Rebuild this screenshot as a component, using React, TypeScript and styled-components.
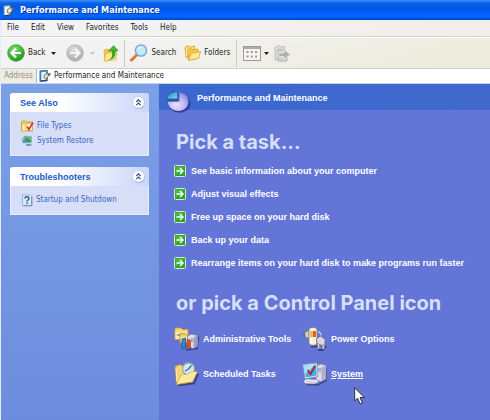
import React from "react";
import styled, { createGlobalStyle } from "styled-components";

const ui = `"DejaVu Sans Condensed", "Noto Sans", sans-serif`;
const bold = `"Liberation Sans", sans-serif`;

const GlobalStyle = createGlobalStyle`
  * { box-sizing: border-box; }
  body { margin: 0; font: 8px/12px ${ui}; color: #222; background: #6375d6; }
  button, input { font: inherit; color: inherit; border: 0; background: none; padding: 0; margin: 0; }
  ul { list-style: none; margin: 0; padding: 0; }
  h1, h2, h3 { margin: 0; }
  a { color: inherit; text-decoration: none; }
  svg { display: block; flex: none; overflow: visible; }
`;

const Window = styled.div`
  min-height: 100vh;
  display: flex;
  flex-direction: column;
  border-left: 1px solid #e4ecfa;
`;

const TitleBar = styled.header`
  display: flex;
  align-items: center;
  gap: 5px;
  height: 20px;
  margin-left: -1px;
  padding: 0 2px;
  color: #fff;
  background: linear-gradient(#3a93fb 0, #0a63ea 3px, #0054e3 8px, #0162fb 13px, #0066ff 17px, #0040c4 20px);
`;

const WindowTitle = styled.h1`
  font: 700 9px/16px "DejaVu Sans Condensed", sans-serif;
  text-shadow: 1px 1px 0 #0b3aa0;
`;

const MenuBar = styled.nav`
  display: flex;
  align-items: center;
  gap: 12px;
  height: 17px;
  padding: 0 6px;
  background: linear-gradient(90deg, #f4f4f6, #efeee8);
  border-bottom: 1px solid #d6d3c6;
`;

const Toolbar = styled.div`
  display: flex;
  align-items: center;
  height: 32px;
  padding: 0 6px;
  background: linear-gradient(165deg, #f3f3f3 20%, #ecead8);
  border-top: 1px solid #fff;
  border-bottom: 1px solid #c9d0d4;
`;

const ToolButton = styled.button<{ $after: number }>`
  display: flex;
  align-items: center;
  gap: 3px;
  margin-right: ${(p) => p.$after}px;
`;

const Divider = styled.span<{ $after: number }>`
  width: 1px;
  height: 27px;
  background: #cfccbd;
  margin-right: ${(p) => p.$after}px;
`;

const AddressBar = styled.div`
  display: flex;
  align-items: center;
  height: 15px;
  background: #efede1;
  border-bottom: 1px solid #c5d3e6;
`;

const AddressLabel = styled.label`
  width: 35px;
  padding-left: 3px;
  color: #8f8d83;
`;

const AddressField = styled.div`
  flex: 1;
  display: flex;
  align-items: center;
  gap: 3px;
  height: 100%;
  padding-left: 2px;
  background: #fff;
  border-left: 1px solid #a9bccd;
`;

const AddressInput = styled.input`
  flex: 1;
  min-width: 0;
  outline: none;
`;

const Body = styled.div`
  flex: 1;
  display: grid;
  grid-template-columns: 158px 1fr;
`;

const Sidebar = styled.aside`
  display: flex;
  flex-direction: column;
  gap: 11px;
  padding: 9px 10px 9px 9px;
  background: linear-gradient(#7aa0e6, #6e8cdd);
`;

const Card = styled.section`
  background: #d6dff7;
  color: #3a66c8;
  border-radius: 3px 3px 0 0;
`;

const CardHeader = styled.div`
  display: flex;
  align-items: center;
  justify-content: space-between;
  height: 19px;
  padding: 0 4px 0 10px;
  border-radius: 3px 3px 0 0;
  background: linear-gradient(90deg, #fff 35%, #c9d6f8);
`;

const CardTitle = styled.h3`
  font: 700 9px/12px ${bold};
  color: #215dc6;
`;

const Collapse = styled.button`
  display: block;
`;

const CardList = styled.ul`
  display: flex;
  flex-direction: column;
  gap: 3px;
  padding: 8px 10px;
  border: 1px solid #e6ecfb;
  border-top: 0;
`;

const CardLink = styled.a`
  display: flex;
  align-items: center;
  gap: 3px;
  height: 12px;
`;

const Main = styled.main`
  background: #6375d6;
  color: #fff;
`;

const Band = styled.div`
  display: flex;
  align-items: flex-start;
  gap: 6px;
  height: 26px;
  padding: 7px 7px 0;
  background: linear-gradient(90deg, #3a68cf, #4169cd);
`;

const BandTitle = styled.h2`
  font: 700 9px/14px ${bold};
`;

const Content = styled.div`
  padding: 20px 15px;
`;

const Heading = styled.h2`
  padding-left: 2px;
  font: 700 20px/24px Inter, sans-serif;
  color: #d6dff7;
`;

const TaskList = styled.ul`
  display: flex;
  flex-direction: column;
  justify-content: space-between;
  min-height: 104px;
  margin: 11px 0 22px;
`;

const TaskItem = styled.li`
  display: flex;
`;

const TaskLink = styled.a`
  display: flex;
  align-items: center;
  gap: 5px;
  font: 700 9px/12px ${bold};
`;

const IconGrid = styled.div`
  display: grid;
  grid-template-columns: 128px 1fr;
  row-gap: 11px;
  margin-top: 12px;
`;

const IconLink = styled.a<{ $active?: boolean }>`
  display: flex;
  align-items: center;
  gap: 4px;
  font: 700 9px/12px ${bold};
  span { text-decoration: ${(p) => (p.$active ? "underline" : "none")}; }
`;

const Pointer = styled.svg`
  position: fixed;
  left: 354px;
  top: 387px;
  pointer-events: none;
`;

const PanelIcon = ({ size }: { size: number }) => (
  <svg width={size} height={size} viewBox="0 0 13 13">
    <path d="M1 1l8-.7v11.500L1 12.500z" fill="#4a8fd8" stroke="#27528e" strokeWidth=".8" />
    <path d="M2.500 2.500L7.500 2v8.500l-5 .5z" fill="#e9f6ff" />
    <path d="M5.500 8.500V5.500L9 3.500l2 1.500-2 3.500-2 1z" fill="#f1e2ac" stroke="#3c4a5c" strokeWidth=".7" />
    <path d="M9.500 3.500h3v2.500h-3z" fill="#5c6678" />
    <path d="M2 11.800l6.500-.6" stroke="#1c3a6c" />
  </svg>
);

const Orb = ({ gray }: { gray?: boolean }) => {
  const id = gray ? "orbGray" : "orbGreen";
  return (
    <svg width="18" height="18" viewBox="0 0 18 18">
      <defs>
        <radialGradient id={id} cx=".4" cy=".3" r=".75">
          <stop offset="0" stopColor={gray ? "#dcdcdc" : "#8ade76"} />
          <stop offset=".6" stopColor={gray ? "#bdbdbd" : "#3db534"} />
          <stop offset="1" stopColor={gray ? "#aaaaaa" : "#1d8a1d"} />
        </radialGradient>
      </defs>
      <circle cx="9" cy="9" r="8.300" fill={`url(#${id})`} stroke={gray ? "#b5b5b5" : "#3d9a3b"} strokeWidth=".8" />
      <path
        d={gray ? "M4 9h9M9 4.500L13.500 9 9 13.500" : "M14 9H5M9 4.500L4.500 9 9 13.500"}
        fill="none" stroke={gray ? "#f4f4f4" : "#fff"} strokeWidth="2.200"
      />
    </svg>
  );
};

const Caret = ({ color = "#222" }: { color?: string }) => (
  <svg width="5" height="3" viewBox="0 0 5 3"><path d="M0 0h5L2.500 3z" fill={color} /></svg>
);

const UpIcon = () => (
  <svg width="16" height="17" viewBox="0 0 16 17">
    <path d="M1 5l4-1 1 1.500 7-1V14L2 16z" fill="#f3c848" stroke="#d8a830" strokeWidth=".7" />
    <path d="M1 16L3 8.500l11-1.500L12.500 15z" fill="#fde88a" stroke="#dfb23c" strokeWidth=".7" />
    <path d="M4.500 15c4.500-.8 5-4 4.500-9.500h3.500c.5 6-2 9.800-8 9.500z" fill="#35a92c" />
    <path d="M5.500 6L10.500.8 15 5.500l-4.500.3z" fill="#4cbb3d" stroke="#248c20" strokeWidth=".7" />
  </svg>
);

const SearchIcon = () => (
  <svg width="18" height="18" viewBox="0 0 18 18">
    <path d="M1.500 16l6-6" stroke="#d06b2c" strokeWidth="3" strokeLinecap="round" />
    <path d="M1.500 15.200l5-5" stroke="#f6a66a" strokeLinecap="round" />
    <circle cx="11" cy="6.500" r="5.600" fill="#c4e8fc" stroke="#7aa9dd" strokeWidth="1.500" />
    <path d="M7.500 6c.5-2.500 3-3.500 5-2.700-2 .5-3.500 1.200-5 2.700z" fill="#fff" />
  </svg>
);

const FoldersIcon = () => (
  <svg width="17" height="16" viewBox="0 0 17 16">
    <path d="M1 2.500l3-2 2 1.500L10.500 1v9L2 12.500z" fill="#fbd965" stroke="#d9a02c" strokeWidth=".8" />
    <path d="M3.500 5.500l3-2 2 1.500L14 4v9l-9.500 2z" fill="#f6c94c" stroke="#d9a02c" strokeWidth=".8" />
    <path d="M4.500 15.500L7 8.500l9.500-2L14.500 13.500z" fill="#ffeb94" stroke="#d9a02c" strokeWidth=".8" />
    <path d="M2 11l1-6.500" stroke="#fff3b8" />
  </svg>
);

const ViewsIcon = () => (
  <svg width="18" height="15" viewBox="0 0 18 15">
    <rect x=".5" y=".5" width="17" height="14" fill="#f6f5f1" stroke="#9a9a96" />
    <path d="M1 2h16" stroke="#acaca8" strokeWidth="2" />
    <path d="M3.500 6h11M3.500 10.500h11" stroke="#969694" strokeWidth="2" strokeDasharray="2 2.300" />
  </svg>
);

const MoveIcon = () => (
  <svg width="17" height="17" viewBox="0 0 17 17">
    <path d="M1 2.500l4-2L6.500 2l4-.5V13L1 15z" fill="#dededc" stroke="#b3b3b0" strokeWidth=".8" />
    <path d="M4 4.500h6l3 3V16H4z" fill="#d2d2cf" stroke="#a9a9a6" strokeWidth=".8" />
    <path d="M4.500 8h5.500V4.500l6.500 5L10 14.500V11.500H4.500z" fill="#b0b0ad" stroke="#ececea" strokeWidth=".8" />
  </svg>
);

const Chevron = () => (
  <svg width="13" height="13" viewBox="0 0 13 13">
    <circle cx="6.800" cy="7" r="6" fill="#8fa6d8" />
    <circle cx="6.500" cy="6.300" r="5.900" fill="#fff" stroke="#b7c5e8" strokeWidth=".6" />
    <path d="M4.300 6l2.200-2.200L8.700 6M4.300 9.200L6.500 7l2.200 2.200" fill="none" stroke="#2c4f9e" strokeWidth="1.200" />
  </svg>
);

const FileTypesIcon = () => (
  <svg width="13" height="12" viewBox="0 0 13 12">
    <path d="M.5 2l1-1h3l1 1h6v9H.5z" fill="#f6cf55" stroke="#c79324" strokeWidth=".8" />
    <path d="M1 5h8v5.500H1z" fill="#fdeb9a" />
    <path d="M5 3.500h6.500v7H5z" fill="#fff4dc" stroke="#d29a50" strokeWidth=".6" />
    <path d="M6 6.500l2 3L12 2.500" fill="none" stroke="#d13a1d" strokeWidth="1.600" />
  </svg>
);

const RestoreIcon = () => (
  <svg width="13" height="12" viewBox="0 0 13 12">
    <path d="M3 1l7.500.8v6L3 7.500z" fill="#2e9c60" stroke="#9db2c8" strokeWidth=".8" />
    <path d="M5 2.200l5 .5V5z" fill="#82d06a" />
    <path d="M5 8.800l5 .2.5 1.800-5 .3z" fill="#7c93ab" />
    <path d="M.8 5a3 3 0 0 1 4.500-1.800" fill="none" stroke="#7bc96c" strokeWidth="1.200" />
    <circle cx="3.200" cy="6.300" r="1.900" fill="#5b8ee0" />
  </svg>
);

const HelpIcon = () => (
  <svg width="12" height="12" viewBox="0 0 12 13">
    <path d="M1 1h8l2 2v9.500H1z" fill="#d8ebfd" stroke="#8fabd2" strokeWidth=".9" />
    <path d="M11.300 3v9.700H2" fill="none" stroke="#6b86b3" />
    <path d="M3.800 5c0-3 4.600-2.500 4.300 0C8 6.500 6 6.500 6 8.200M6 9.300v1.500" fill="none" stroke="#2a568f" strokeWidth="1.500" />
  </svg>
);

const PieIcon = () => (
  <svg width="25" height="23" viewBox="0 0 25 23">
    <defs>
      <radialGradient id="pie" cx=".4" cy=".65" r=".65">
        <stop offset="0" stopColor="#eadfff" />
        <stop offset=".6" stopColor="#c3bbf5" />
        <stop offset="1" stopColor="#8c8ce0" />
      </radialGradient>
      <linearGradient id="slice" y2="1">
        <stop stopColor="#1f78bd" />
        <stop offset="1" stopColor="#86dcf8" />
      </linearGradient>
    </defs>
    <ellipse cx="13.500" cy="12.500" rx="11" ry="9.300" fill="#2c3f94" />
    <path d="M12.500 10.500V1.500c5.500 0 10 3.500 10 9s-4.500 9.500-10 9.500S2 16.500 2 10.500z" fill="url(#pie)" />
    <path d="M13 10.500V2" stroke="#4e55b4" />
    <path d="M.5 8C1.500 3.500 5 .8 11.500.5V8z" fill="url(#slice)" stroke="#1c4b9c" strokeWidth=".7" />
    <path d="M.5 8h11v2.300H1z" fill="#1f5da8" />
  </svg>
);

const GoIcon = () => (
  <svg width="12" height="12" viewBox="0 0 12 12">
    <rect x=".5" y=".5" width="11" height="11" rx="1" fill="#2aa52a" stroke="#d4ecd2" />
    <path d="M1.500 10.500v-9h9z" fill="#5cc352" opacity=".6" />
    <path d="M2.500 6h6.500M6 3l3 3-3 3" fill="none" stroke="#fff" strokeWidth="1.500" />
  </svg>
);

const AdminIcon = () => (
  <svg width="25" height="24" viewBox="0 0 25 24">
    <path d="M12 23l11-1.500 1.500-12" fill="none" stroke="#36438c" strokeWidth="1.500" />
    <path d="M.8 2.500L2 1h5l1.500 1.500H14v10H1z" fill="#f6d873" stroke="#c79c45" strokeWidth=".8" />
    <path d="M1.500 5H13v7H1.500z" fill="#fcebb0" />
    <path d="M3 7h3v2H3zM8 6.500h3v2H8z" fill="#a9a68f" />
    <path d="M6 6.500h5L12.500 8H18v8H6z" fill="#f3cc5d" stroke="#b98d3c" strokeWidth=".8" />
    <path d="M7 9.500h9v5H7z" fill="#fbe6a0" />
    <path d="M13.500 9l4-2 6 1.500v10.500l-4 2.500-6-1.500z" fill="#dcdcec" stroke="#7576a0" strokeWidth=".7" />
    <path d="M19.500 10.500v11l4-2.500V8.500z" fill="#9c9dc0" />
    <path d="M17 12h2M17 14h2" stroke="#77789e" />
    <path d="M8 12l3.500-1v10l-3.500 1z" fill="#2f8ccb" stroke="#184c84" strokeWidth=".7" />
    <path d="M13 12.500l3.500.5v8l-3.500-.5z" fill="#e35122" stroke="#8e2c14" strokeWidth=".5" />
  </svg>
);

const ScheduledIcon = () => (
  <svg width="25" height="24" viewBox="0 0 25 24">
    <path d="M4 23.300l16-2L24 12" fill="none" stroke="#36438c" strokeWidth="2" />
    <path d="M1 4.500l5-2L8.500 4l10-1.500v14L2.500 22z" fill="#f7d470" stroke="#c0933a" strokeWidth=".8" />
    <circle cx="14.500" cy="7" r="6" fill="#d3e9ee" stroke="#93abb5" strokeWidth="1.300" />
    <path d="M14.500 7l3-3.500M14.500 7l-3.500 2" stroke="#3f6c84" strokeWidth="1.300" />
    <path d="M2.500 22.500L7.500 13l6-.5 2-2L23.500 9.500 18.500 20z" fill="#ffe992" stroke="#c49a40" strokeWidth=".8" />
    <path d="M4 21.500L8.300 13.800l5.500-.5 2-2 6.500-.8" fill="none" stroke="#fff8d2" />
    <path d="M2 6.500l1 13" stroke="#fff0b4" />
  </svg>
);

const PowerIcon = () => (
  <svg width="25" height="24" viewBox="0 0 25 24">
    <path d="M9 19.500h7M16 23h5l3-4" fill="none" stroke="#36438c" strokeWidth="2" />
    <path d="M0 6.500h5M1 9h4" stroke="#5c5c6b" />
    <path d="M3 5l4-1.500v8L3 10z" fill="#d4d2cc" stroke="#74727c" strokeWidth=".8" />
    <path d="M7 3c0-3.500 8-3.500 8 0v13c0 3-8 3-8 0z" fill="#f6f0e2" stroke="#8b8685" strokeWidth=".8" />
    <path d="M11 4h3v6h-3z" fill="#e0602a" />
    <path d="M8 4h3v6H8z" fill="#f9b552" />
    <path d="M9 11.500v5" stroke="#fff" strokeWidth="1.500" />
    <path d="M14.500 11.500l4-2.500 4.500 3v5l-3 1.500-5-2z" fill="#d9d6dc" stroke="#68657a" strokeWidth=".8" />
    <path d="M16.500 17v4.500M21.500 17.500v4.500" stroke="#e9d294" strokeWidth="1.600" />
    <path d="M16 4.500c2 .5 3 2 3 4" fill="none" stroke="#c2c0cc" strokeWidth="1.300" />
  </svg>
);

const SystemIcon = () => (
  <svg width="25" height="24" viewBox="0 0 25 24">
    <path d="M5 22.500l11 .3 8-4.300V6" fill="none" stroke="#36438c" strokeWidth="1.500" />
    <path d="M14 4l5-2 5 1.500v13.500l-5 2.500-5-1z" fill="#dcdceb" stroke="#8182a8" strokeWidth=".7" />
    <path d="M19.500 5.500v13.500l4.500-2.500V3.500z" fill="#adaecb" />
    <path d="M16 7h3M16 9h3" stroke="#7c7da0" />
    <path d="M.8 2.500L15 1l1 13.500L3 17z" fill="#e6eaf5" stroke="#7e88ad" strokeWidth=".7" />
    <path d="M2 3.800L14 2.500l.8 11-11 2z" fill="#43aee6" />
    <path d="M2 3.800L13.500 2.600 3.500 12z" fill="#a3e3fb" />
    <path d="M5.500 8l3 4L13 4" fill="none" stroke="#b3242c" strokeWidth="1.800" />
    <path d="M1.500 19l3-2 11 .8 1 2.200-4 2-9.500-.5z" fill="#f0f0f5" stroke="#8586a6" strokeWidth=".7" />
    <path d="M4 19.500l10 .8" stroke="#b5b6cb" />
  </svg>
);

const menus = ["File", "Edit", "View", "Favorites", "Tools", "Help"];
const tasks = [
  "See basic information about your computer",
  "Adjust visual effects",
  "Free up space on your hard disk",
  "Back up your data",
  "Rearrange items on your hard disk to make programs run faster",
];
const panels = [
  { label: "Administrative Tools", icon: <AdminIcon /> },
  { label: "Power Options", icon: <PowerIcon /> },
  { label: "Scheduled Tasks", icon: <ScheduledIcon /> },
  { label: "System", icon: <SystemIcon />, active: true },
];
const cards = [
  { title: "See Also", links: [{ label: "File Types", icon: <FileTypesIcon /> }, { label: "System Restore", icon: <RestoreIcon /> }] },
  { title: "Troubleshooters", links: [{ label: "Startup and Shutdown", icon: <HelpIcon /> }] },
];

export default function App() {
  return (
    <Window>
      <GlobalStyle />
      <TitleBar>
        <PanelIcon size={13} />
        <WindowTitle>Performance and Maintenance</WindowTitle>
      </TitleBar>
      <MenuBar>{menus.map((m) => <button key={m}>{m}</button>)}</MenuBar>
      <Toolbar>
        <ToolButton $after={6}><Orb />Back</ToolButton>
        <ToolButton $after={10} aria-label="Back history"><Caret /></ToolButton>
        <ToolButton $after={6} aria-label="Forward" disabled><Orb gray /></ToolButton>
        <ToolButton $after={8} aria-label="Forward history" disabled><Caret color="#c4c4c0" /></ToolButton>
        <ToolButton $after={5} aria-label="Up"><UpIcon /></ToolButton>
        <Divider $after={5} />
        <ToolButton $after={8}><SearchIcon />Search</ToolButton>
        <ToolButton $after={6}><FoldersIcon />Folders</ToolButton>
        <Divider $after={6} />
        <ToolButton $after={5} aria-label="Views"><ViewsIcon /><Caret /></ToolButton>
        <ToolButton $after={0} aria-label="Move to" disabled><MoveIcon /></ToolButton>
      </Toolbar>
      <AddressBar>
        <AddressLabel htmlFor="address">Address</AddressLabel>
        <AddressField>
          <PanelIcon size={12} />
          <AddressInput id="address" defaultValue="Performance and Maintenance" />
        </AddressField>
      </AddressBar>
      <Body>
        <Sidebar>
          {cards.map((c) => (
            <Card key={c.title}>
              <CardHeader>
                <CardTitle>{c.title}</CardTitle>
                <Collapse aria-label={`Collapse ${c.title}`}><Chevron /></Collapse>
              </CardHeader>
              <CardList>
                {c.links.map((l) => (
                  <li key={l.label}><CardLink href="#">{l.icon}{l.label}</CardLink></li>
                ))}
              </CardList>
            </Card>
          ))}
        </Sidebar>
        <Main>
          <Band>
            <PieIcon />
            <BandTitle>Performance and Maintenance</BandTitle>
          </Band>
          <Content>
            <Heading>Pick a task...</Heading>
            <TaskList>
              {tasks.map((t) => (
                <TaskItem key={t}><TaskLink href="#"><GoIcon />{t}</TaskLink></TaskItem>
              ))}
            </TaskList>
            <Heading>or pick a Control Panel icon</Heading>
            <IconGrid>
              {panels.map((p) => (
                <IconLink key={p.label} href="#" $active={p.active}>{p.icon}<span>{p.label}</span></IconLink>
              ))}
            </IconGrid>
          </Content>
        </Main>
      </Body>
      <Pointer width="11" height="18" viewBox="0 0 11 18">
        <path d="M.7.8v13l3-2.600 2.300 5.600 2.300-1L6 10.500h4.300z" fill="#fff" stroke="#222" strokeWidth=".9" />
      </Pointer>
    </Window>
  );
}
